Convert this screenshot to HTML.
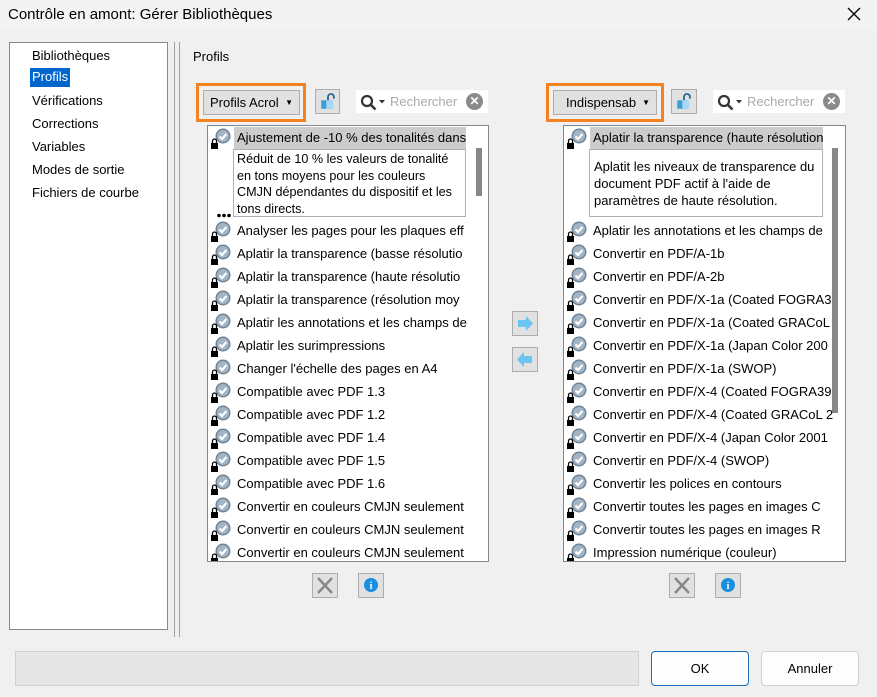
<!DOCTYPE html>
<html><head><meta charset="utf-8"><style>
*{margin:0;padding:0;box-sizing:border-box}
body{width:877px;height:697px;background:#f0f0f0;font-family:"Liberation Sans",sans-serif;font-size:13px;color:#000;position:relative;overflow:hidden}
.a{position:absolute}
.title{left:0;top:0;width:877px;height:30px;background:#f3f3f3}
.list{background:#fff;border:1px solid #828790}
.row{position:absolute;height:23px;line-height:22px;white-space:nowrap;overflow:hidden;font-size:13px}
.ic{position:absolute}
.btn{background:#e1e1e1;border:1px solid #adadad}
.sb{background:#fff;border:1px solid #f0f0f0}
</style></head><body>
<svg width="0" height="0" style="position:absolute"><defs>
<symbol id="ic" viewBox="0 0 26 24">
<circle cx="14" cy="9" r="7.5" fill="#6f8496"/><circle cx="14" cy="9" r="6" fill="#a3b5c4"/>
<path d="M10.5 9.5l2.5 2.5 4.5-5" stroke="#fff" stroke-width="2.2" fill="none"/>
<path d="M3.5 16v-2a2 2 0 0 1 4 0v2" stroke="#000" stroke-width="1.3" fill="none"/>
<rect x="2" y="16" width="7" height="6" fill="#000"/>
</symbol>
<symbol id="lk" viewBox="0 0 26 24"><rect x="5" y="10" width="13" height="10" fill="#3aa0d8"/><rect x="11" y="10" width="8" height="10" fill="#a8d8f4"/><path d="M13 10V6a3.5 3.5 0 0 1 7 0v2" stroke="#1f5f8a" stroke-width="2" fill="none"/></symbol>
<symbol id="mg" viewBox="0 0 30 20"><circle cx="8" cy="8" r="5" stroke="#333" stroke-width="2.2" fill="none"/><path d="M11.5 11.5l5 5" stroke="#333" stroke-width="2.6"/><path d="M20 7h6l-3 3.5z" fill="#333"/></symbol>
</defs></svg>
<div class="a title"></div>
<div class="a" style="left:8px;top:6px;font-size:15px">Contrôle en amont: Gérer Bibliothèques</div>
<svg class="a" style="left:846px;top:6px" width="16" height="16"><path d="M2 2l12 12M14 2L2 14" stroke="#000" stroke-width="1.3"/></svg>

<div class="a list" style="left:9px;top:42px;width:159px;height:588px"></div>
<div class="a" style="left:32px;top:47px;line-height:18px;font-size:13px">Bibliothèques</div>
<div class="a" style="left:30px;top:68px;height:19px;line-height:18px;background:#0066cc;color:#fff;padding:0 2px">Profils</div>
<div class="a" style="left:32px;top:92px;line-height:18px">Vérifications</div>
<div class="a" style="left:32px;top:115px;line-height:18px">Corrections</div>
<div class="a" style="left:32px;top:138px;line-height:18px">Variables</div>
<div class="a" style="left:32px;top:161px;line-height:18px">Modes de sortie</div>
<div class="a" style="left:32px;top:184px;line-height:18px">Fichiers de courbe</div>
<div class="a" style="left:174px;top:42px;width:1px;height:595px;background:#a0a0a0"></div>
<div class="a" style="left:179px;top:42px;width:1px;height:595px;background:#a0a0a0"></div>
<div class="a" style="left:193px;top:48px;line-height:18px">Profils</div>

<!-- left toolbar -->
<div class="a" style="left:196px;top:83px;width:110px;height:39px;border:3px solid #f58220"></div>
<div class="a btn" style="left:203px;top:90px;width:97px;height:25px;line-height:23px;padding-left:6px;overflow:hidden;white-space:nowrap">Profils Acrol<span class="a" style="right:6px;top:0;font-size:8px;background:#e1e1e1;padding-left:2px">▼</span></div>
<div class="a btn" style="left:315px;top:89px;width:25px;height:25px"><svg width="22" height="22" style="margin:1px"><use href="#lk"/></svg></div>
<div class="a sb" style="left:355px;top:89px;width:134px;height:25px"></div>
<svg class="a" style="left:359px;top:93px" width="30" height="20"><use href="#mg"/></svg>
<div class="a" style="left:390px;top:94px;color:#aaa">Rechercher</div>
<div class="a" style="left:466px;top:93px;width:17px;height:17px;border-radius:50%;background:#8a8a8a;color:#fff;font-size:12px;text-align:center;line-height:17px;font-weight:bold">✕</div>

<!-- right toolbar -->
<div class="a" style="left:546px;top:83px;width:118px;height:39px;border:3px solid #f58220"></div>
<div class="a btn" style="left:553px;top:90px;width:104px;height:25px;line-height:23px;padding-left:12px;overflow:hidden;white-space:nowrap">Indispensab<span class="a" style="right:6px;top:0;font-size:8px">▼</span></div>
<div class="a btn" style="left:671px;top:89px;width:26px;height:25px"><svg width="22" height="22" style="margin:1px"><use href="#lk"/></svg></div>
<div class="a sb" style="left:712px;top:89px;width:134px;height:25px"></div>
<svg class="a" style="left:716px;top:93px" width="30" height="20"><use href="#mg"/></svg>
<div class="a" style="left:747px;top:94px;color:#aaa">Rechercher</div>
<div class="a" style="left:823px;top:93px;width:17px;height:17px;border-radius:50%;background:#8a8a8a;color:#fff;font-size:12px;text-align:center;line-height:17px;font-weight:bold">✕</div>

<!-- left list -->
<div class="a list" style="left:207px;top:125px;width:282px;height:437px;overflow:hidden">
 <div class="row" style="left:26px;top:1px;width:232px;background:#ccc;padding-left:3px">Ajustement de -10 % des tonalités dans</div>
 <div class="a" style="left:25px;top:23px;width:233px;height:68px;border:1px solid #b0b0b0;padding:1px 3px;line-height:16.5px;font-size:12.6px">Réduit de 10 % les valeurs de tonalité en tons moyens pour les couleurs CMJN dépendantes du dispositif et les tons directs.</div>
 <div class="a" style="left:268px;top:22px;width:6px;height:48px;background:#888"></div>
 <svg class="ic" style="left:1px;top:1px" width="26" height="24"><use href="#ic"/></svg>
 <svg class="a" style="left:9px;top:87px" width="14" height="5"><circle cx="2" cy="2.5" r="1.8"/><circle cx="7" cy="2.5" r="1.8"/><circle cx="12" cy="2.5" r="1.8"/></svg>
 <svg class="ic" style="left:1px;top:94px" width="26" height="24"><use href="#ic"/></svg><div class="row" style="left:29px;top:94px">Analyser les pages pour les plaques eff</div>
 <svg class="ic" style="left:1px;top:117px" width="26" height="24"><use href="#ic"/></svg><div class="row" style="left:29px;top:117px">Aplatir la transparence (basse résolutio</div>
 <svg class="ic" style="left:1px;top:140px" width="26" height="24"><use href="#ic"/></svg><div class="row" style="left:29px;top:140px">Aplatir la transparence (haute résolutio</div>
 <svg class="ic" style="left:1px;top:163px" width="26" height="24"><use href="#ic"/></svg><div class="row" style="left:29px;top:163px">Aplatir la transparence (résolution moy</div>
 <svg class="ic" style="left:1px;top:186px" width="26" height="24"><use href="#ic"/></svg><div class="row" style="left:29px;top:186px">Aplatir les annotations et les champs de</div>
 <svg class="ic" style="left:1px;top:209px" width="26" height="24"><use href="#ic"/></svg><div class="row" style="left:29px;top:209px">Aplatir les surimpressions</div>
 <svg class="ic" style="left:1px;top:232px" width="26" height="24"><use href="#ic"/></svg><div class="row" style="left:29px;top:232px">Changer l'échelle des pages en A4</div>
 <svg class="ic" style="left:1px;top:255px" width="26" height="24"><use href="#ic"/></svg><div class="row" style="left:29px;top:255px">Compatible avec PDF 1.3</div>
 <svg class="ic" style="left:1px;top:278px" width="26" height="24"><use href="#ic"/></svg><div class="row" style="left:29px;top:278px">Compatible avec PDF 1.2</div>
 <svg class="ic" style="left:1px;top:301px" width="26" height="24"><use href="#ic"/></svg><div class="row" style="left:29px;top:301px">Compatible avec PDF 1.4</div>
 <svg class="ic" style="left:1px;top:324px" width="26" height="24"><use href="#ic"/></svg><div class="row" style="left:29px;top:324px">Compatible avec PDF 1.5</div>
 <svg class="ic" style="left:1px;top:347px" width="26" height="24"><use href="#ic"/></svg><div class="row" style="left:29px;top:347px">Compatible avec PDF 1.6</div>
 <svg class="ic" style="left:1px;top:370px" width="26" height="24"><use href="#ic"/></svg><div class="row" style="left:29px;top:370px">Convertir en couleurs CMJN seulement</div>
 <svg class="ic" style="left:1px;top:393px" width="26" height="24"><use href="#ic"/></svg><div class="row" style="left:29px;top:393px">Convertir en couleurs CMJN seulement</div>
 <svg class="ic" style="left:1px;top:416px" width="26" height="24"><use href="#ic"/></svg><div class="row" style="left:29px;top:416px">Convertir en couleurs CMJN seulement</div>
</div>

<!-- right list -->
<div class="a list" style="left:563px;top:125px;width:283px;height:437px;overflow:hidden">
 <div class="row" style="left:26px;top:1px;width:233px;background:#ccc;padding-left:3px">Aplatir la transparence (haute résolution</div>
 <div class="a" style="left:25px;top:23px;width:234px;height:68px;border:1px solid #b0b0b0;padding:8px 4px;line-height:17px">Aplatit les niveaux de transparence du document PDF actif à l'aide de paramètres de haute résolution.</div>
 <div class="a" style="left:268px;top:22px;width:6px;height:265px;background:#888"></div>
 <svg class="ic" style="left:1px;top:1px" width="26" height="24"><use href="#ic"/></svg>
 <svg class="ic" style="left:1px;top:94px" width="26" height="24"><use href="#ic"/></svg><div class="row" style="left:29px;top:94px">Aplatir les annotations et les champs de</div>
 <svg class="ic" style="left:1px;top:117px" width="26" height="24"><use href="#ic"/></svg><div class="row" style="left:29px;top:117px">Convertir en PDF/A-1b</div>
 <svg class="ic" style="left:1px;top:140px" width="26" height="24"><use href="#ic"/></svg><div class="row" style="left:29px;top:140px">Convertir en PDF/A-2b</div>
 <svg class="ic" style="left:1px;top:163px" width="26" height="24"><use href="#ic"/></svg><div class="row" style="left:29px;top:163px">Convertir en PDF/X-1a (Coated FOGRA3</div>
 <svg class="ic" style="left:1px;top:186px" width="26" height="24"><use href="#ic"/></svg><div class="row" style="left:29px;top:186px">Convertir en PDF/X-1a (Coated GRACoL</div>
 <svg class="ic" style="left:1px;top:209px" width="26" height="24"><use href="#ic"/></svg><div class="row" style="left:29px;top:209px">Convertir en PDF/X-1a (Japan Color 200</div>
 <svg class="ic" style="left:1px;top:232px" width="26" height="24"><use href="#ic"/></svg><div class="row" style="left:29px;top:232px">Convertir en PDF/X-1a (SWOP)</div>
 <svg class="ic" style="left:1px;top:255px" width="26" height="24"><use href="#ic"/></svg><div class="row" style="left:29px;top:255px">Convertir en PDF/X-4 (Coated FOGRA39</div>
 <svg class="ic" style="left:1px;top:278px" width="26" height="24"><use href="#ic"/></svg><div class="row" style="left:29px;top:278px">Convertir en PDF/X-4 (Coated GRACoL 2</div>
 <svg class="ic" style="left:1px;top:301px" width="26" height="24"><use href="#ic"/></svg><div class="row" style="left:29px;top:301px">Convertir en PDF/X-4 (Japan Color 2001</div>
 <svg class="ic" style="left:1px;top:324px" width="26" height="24"><use href="#ic"/></svg><div class="row" style="left:29px;top:324px">Convertir en PDF/X-4 (SWOP)</div>
 <svg class="ic" style="left:1px;top:347px" width="26" height="24"><use href="#ic"/></svg><div class="row" style="left:29px;top:347px">Convertir les polices en contours</div>
 <svg class="ic" style="left:1px;top:370px" width="26" height="24"><use href="#ic"/></svg><div class="row" style="left:29px;top:370px">Convertir toutes les pages en images C</div>
 <svg class="ic" style="left:1px;top:393px" width="26" height="24"><use href="#ic"/></svg><div class="row" style="left:29px;top:393px">Convertir toutes les pages en images R</div>
 <svg class="ic" style="left:1px;top:416px" width="26" height="24"><use href="#ic"/></svg><div class="row" style="left:29px;top:416px">Impression numérique (couleur)</div>
</div>

<!-- arrows -->
<div class="a btn" style="left:512px;top:311px;width:26px;height:25px"><svg width="24" height="23"><path d="M5 8h8V4l7 7.5-7 7.5v-4H5z" fill="#6cc4f0"/></svg></div>
<div class="a btn" style="left:512px;top:347px;width:26px;height:25px"><svg width="24" height="23"><path d="M19 8h-8V4l-7 7.5 7 7.5v-4h8z" fill="#6cc4f0"/></svg></div>

<!-- bottom icon buttons -->
<div class="a btn" style="left:312px;top:573px;width:26px;height:25px"><svg width="24" height="23"><path d="M5 4l14 15M19 4L5 19" stroke="#888" stroke-width="2.5"/></svg></div>
<div class="a btn" style="left:358px;top:573px;width:26px;height:25px"><svg width="24" height="23"><circle cx="12" cy="11" r="7" fill="#1a8fe0"/><text x="12" y="15" font-size="10" font-weight="bold" fill="#fff" text-anchor="middle" font-family="Liberation Serif">i</text></svg></div>
<div class="a btn" style="left:669px;top:573px;width:26px;height:25px"><svg width="24" height="23"><path d="M5 4l14 15M19 4L5 19" stroke="#888" stroke-width="2.5"/></svg></div>
<div class="a btn" style="left:715px;top:573px;width:26px;height:25px"><svg width="24" height="23"><circle cx="12" cy="11" r="7" fill="#1a8fe0"/><text x="12" y="15" font-size="10" font-weight="bold" fill="#fff" text-anchor="middle" font-family="Liberation Serif">i</text></svg></div>

<!-- footer -->
<div class="a" style="left:15px;top:651px;width:624px;height:35px;background:#e6e6e6;border:1px solid #d0d0d0"></div>
<div class="a" style="left:651px;top:651px;width:98px;height:35px;background:#fdfdfd;border:1px solid #1f6fb5;border-radius:4px;text-align:center;line-height:33px">OK</div>
<div class="a" style="left:761px;top:651px;width:98px;height:35px;background:#fdfdfd;border:1px solid #d0d0d0;border-radius:4px;text-align:center;line-height:33px">Annuler</div>
</body></html>
